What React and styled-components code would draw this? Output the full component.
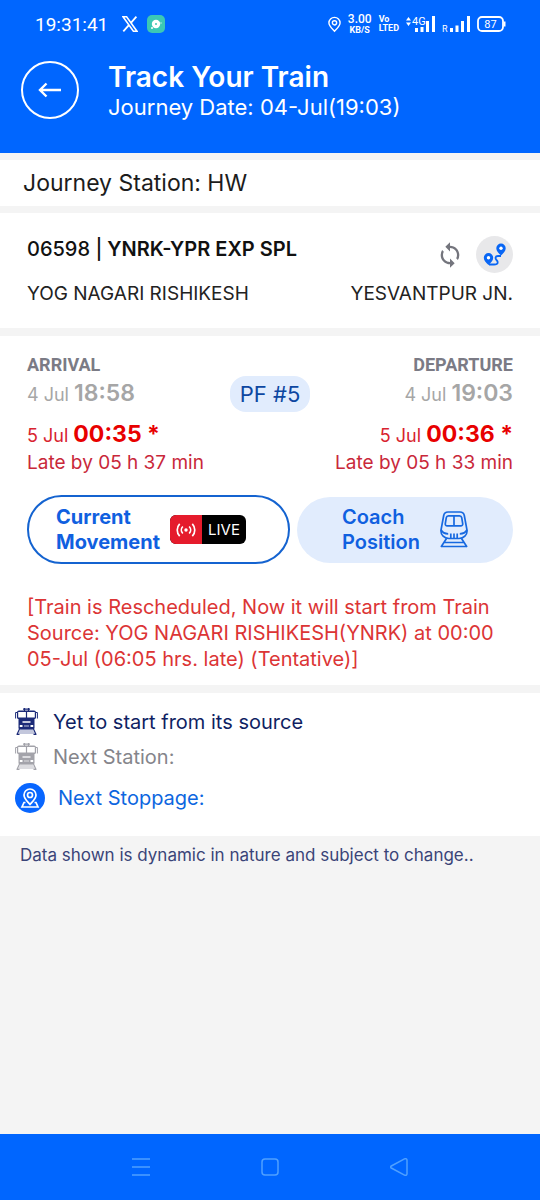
import React from 'react';
import styled, { createGlobalStyle } from 'styled-components';
import { MdLoop } from 'react-icons/md';

const GlobalStyle = createGlobalStyle`
  * {
    box-sizing: border-box;
  }

  body {
    margin: 0;
    background-color: #f4f4f4;
    font-family: Inter, 'Liberation Sans', sans-serif;
  }

  h1, h2, h3, p {
    margin: 0;
    font-weight: 400;
  }

  button {
    padding: 0;
    border: none;
    background: none;
    font-family: inherit;
    cursor: pointer;
  }

  svg {
    display: block;
    flex-shrink: 0;
  }
`;

const StatusBar = () => (
  <StatusDiv>
    <Clock>19:31:41</Clock>
    <svg width="16" height="16" viewBox="0 0 16 16" fill="none" stroke="#fff">
      <path d="M1 .8h3.6L15 15.2h-3.6z" strokeWidth="1.6" />
      <path d="M14.4.6 8.9 6.9M6.9 9.1 1.3 15.4" strokeWidth="1.8" />
    </svg>
    <AppBadge>
      <svg width="18" height="18" viewBox="0 0 18 18">
        <circle cx="9" cy="9" r="4.2" fill="#fff" />
        <circle cx="9" cy="9" r="1" fill="#3cc8b4" />
        <circle cx="5" cy="13" r="1" fill="#fff" />
        <circle cx="14" cy="8" r=".8" fill="#b8efe5" />
      </svg>
    </AppBadge>
    <StatusRight>
      <svg width="13" height="17" viewBox="0 0 14 17" fill="none" stroke="#fff" strokeWidth="1.5">
        <path d="M7 15.8C4 12.6 1 9.8 1 6.8a6 6 0 0 1 12 0c0 3-3 5.8-6 9z" />
        <circle cx="7" cy="6.7" r="2.3" />
      </svg>
      <Stacked>
        <SpeedValue>3.00</SpeedValue>
        <SpeedUnit>KB/S</SpeedUnit>
      </Stacked>
      <Stacked>
        <VoLte>Vo</VoLte>
        <VoLte>LTED</VoLte>
      </Stacked>
      <svg width="29" height="18" viewBox="0 0 29 18" fill="#fff">
        <path d="M0 5.5 2.5 2 5 5.5zM0 7.500 2.500 11 5 7.500z" />
        <text x="6" y="10" fontSize="11" fontFamily="Roboto, sans-serif">4G</text>
        <path d="M9 13h3v4H9zM14.5 12h3v5h-3zM20 6h3v11h-3zM26 1h3v16h-3z" />
      </svg>
      <svg width="28" height="18" viewBox="0 0 28 18" fill="#fff">
        <text x="0" y="17" fontSize="9" fontFamily="Roboto, sans-serif">R</text>
        <path d="M8 13h3v4H8zM13.5 10.5h3V17h-3zM19 6h3v11h-3zM25 1h3v16h-3z" />
      </svg>
      <svg width="29" height="16" viewBox="0 0 29 16">
        <rect x="1" y="1" width="25" height="14" rx="4" fill="none" stroke="#fff" strokeWidth="1.8" />
        <path d="M27.5 5.5v5" stroke="#fff" strokeWidth="2" />
        <text x="13.5" y="12" fontSize="11" textAnchor="middle" fill="#fff" fontFamily="Roboto, sans-serif">
          87
        </text>
      </svg>
    </StatusRight>
  </StatusDiv>
);

const TrainFront = ({ color, shade }) => (
  <svg width="23" height="27" viewBox="0 0 23 27">
    <path d="M9.5 0v3M13.5 0v3M8 1.2h7" stroke={color} strokeWidth="1.2" />
    <path d="M5.500 21h12l2.500 5H3z" fill={shade} />
    <path d="M4.500 21 2 26.500M18.500 21l2.500 5.500M1.500 26.300h3M18.500 26.300h3" stroke={color} strokeWidth="1.2" />
    <path d="M4 2.500h15c1.200 0 2 .8 2 2v5c0 .8-.7 1.500-1.500 1.500v9c0 .8-.7 1.500-1.500 1.500H5c-.8 0-1.500-.7-1.500-1.500v-9C2.700 11 2 10.300 2 9.500v-5c0-1.200.8-2 2-2z" fill={color} />
    <path d="M3.200 4h7.700v5.500H3.200zM12.100 4h7.700v5.500h-7.700z" fill="#fff" />
    <path d="M7.500 13h8v2h-8z" fill={shade} />
    <path d="M4.800 17h2.700v2H4.800zM15.500 17h2.700v2h-2.700z" fill="#fff" />
    <path d="M9 17.500h5v1H9z" fill={shade} />
    <path d="M2 4.500H.6v6M21 4.500h1.400v6" fill="none" stroke={color} strokeWidth="1" />
  </svg>
);

const CoachIcon = () => (
  <svg width="28" height="37" viewBox="0 0 28 37" fill="none" stroke="#1769e0" strokeWidth="1.7">
    <path d="M8 1h12c2.500 0 3.800 1.300 4.300 3.500L27 19c.5 5-3.500 8.500-8 8.500H9C4.500 27.500.5 24 1 19L3.700 4.500C4.200 2.300 5.500 1 8 1z" />
    <path d="M8.500 4.800h11c1.300 0 2 .6 2.200 1.800l1 6c.2 1.400-.5 2.200-2 2.200H7.300c-1.500 0-2.200-.8-2-2.200l1-6c.2-1.200.9-1.800 2.200-1.800zM14 5v9.500" />
    <path d="M1.200 19c1.500 3 3.800 3.800 7 3.800M26.800 19c-1.500 3-3.800 3.800-7 3.800M10.800 22.500V27M14 22.500V27M17.200 22.500V27" />
    <path d="M6.500 27.500 1 36M21.500 27.500 27 36M4 31.500h20M1 35.500h26" />
  </svg>
);

const TimeBlock = ({ label, scheduledDay, scheduled, actualDay, actual, late, alignRight }) => (
  <TimeDiv $right={alignRight}>
    <TimeLabel>{label}</TimeLabel>
    <Scheduled>
      {scheduledDay} <b>{scheduled}</b>
    </Scheduled>
    <Actual>
      {actualDay} <b>{actual} *</b>
    </Actual>
    <Late>{late}</Late>
  </TimeDiv>
);

const App = () => {
  return (
    <Page>
      <GlobalStyle />
      <Header>
        <StatusBar />
        <TitleRow>
          <BackButton aria-label="Back">
            <svg width="24" height="18" viewBox="0 0 24 18" fill="none" stroke="#fff" strokeWidth="2.4">
              <path d="M23 9H2M8.500 2.500 2 9l6.500 6.500" />
            </svg>
          </BackButton>
          <div>
            <Title>Track Your Train</Title>
            <SubTitle>Journey Date: 04-Jul(19:03)</SubTitle>
          </div>
        </TitleRow>
      </Header>

      <Main>
        <StationBar>Journey Station: HW</StationBar>

        <TrainCard>
          <SpreadRow>
            <TrainName>
              <span>06598 |</span> YNRK-YPR EXP SPL
            </TrainName>
            <Actions>
              <IconButton aria-label="Refresh">
                <MdLoop size={28} color="#74757d" />
              </IconButton>
              <IconButton aria-label="Route" $filled>
                <svg width="24" height="23" viewBox="0 0 24 23">
                  <path d="M6 21.500h5c5 0 4-3 2.500-4.500s-1.500-4 1.500-4h3" fill="none" stroke="#0866f5" strokeWidth="1.8" />
                  <path
                    d="M5.500 22C3 19.500.8 17.500.8 14.800a4.700 4.700 0 0 1 9.400 0c0 2.700-2.200 4.700-4.700 7.200zM18 12.500c-2.500-2.500-4.700-4.500-4.700-7.200a4.700 4.700 0 0 1 9.400 0c0 2.700-2.200 4.700-4.700 7.200z"
                    fill="#0866f5"
                  />
                  <circle cx="5.5" cy="14.7" r="1.7" fill="#fff" />
                  <circle cx="18" cy="5.2" r="1.7" fill="#fff" />
                </svg>
              </IconButton>
            </Actions>
          </SpreadRow>
          <SpreadRow>
            <Place>YOG NAGARI RISHIKESH</Place>
            <Place>YESVANTPUR JN.</Place>
          </SpreadRow>
        </TrainCard>

        <TimesCard>
          <TimesRow>
            <TimeBlock
              label="ARRIVAL"
              scheduledDay="4 Jul"
              scheduled="18:58"
              actualDay="5 Jul"
              actual="00:35"
              late="Late by 05 h 37 min"
            />
            <Platform>PF #5</Platform>
            <TimeBlock
              label="DEPARTURE"
              scheduledDay="4 Jul"
              scheduled="19:03"
              actualDay="5 Jul"
              actual="00:36"
              late="Late by 05 h 33 min"
              alignRight
            />
          </TimesRow>

          <ButtonRow>
            <MovementButton>
              <span>
                Current
                <br />
                Movement
              </span>
              <LiveBadge>
                <LiveSignal>
                  <svg width="20" height="16" viewBox="0 0 20 16" fill="none" stroke="#fff" strokeWidth="1.7">
                    <circle cx="10" cy="8" r="1.7" fill="#fff" stroke="none" />
                    <path d="M6.800 4.500a5 5 0 0 0 0 7M13.200 4.500a5 5 0 0 1 0 7M3.700 1.800a9 9 0 0 0 0 12.400M16.300 1.800a9 9 0 0 1 0 12.400" />
                  </svg>
                </LiveSignal>
                <LiveText>LIVE</LiveText>
              </LiveBadge>
            </MovementButton>
            <CoachButton>
              <span>
                Coach
                <br />
                Position
              </span>
              <CoachIcon />
            </CoachButton>
          </ButtonRow>

          <Notice>
            [Train is Rescheduled, Now it will start from Train
            <br />
            Source: YOG NAGARI RISHIKESH(YNRK) at 00:00
            <br />
            05-Jul (06:05 hrs. late) (Tentative)]
          </Notice>
        </TimesCard>

        <StatusCard>
          <StatusRow $color="#101f63">
            <TrainFront color="#1b2a78" shade="#c3c7dc" />
            Yet to start from its source
          </StatusRow>
          <StatusRow $color="#85858b">
            <TrainFront color="#a3a3aa" shade="#dcdce0" />
            Next Station:
          </StatusRow>
          <StatusRow $color="#0d66e0" $tall>
            <svg width="30" height="30" viewBox="0 0 30 30" fill="none" stroke="#fff" strokeWidth="1.7">
              <circle cx="15" cy="15" r="15" fill="#0866ff" stroke="none" />
              <path d="M15 21.500c-3-3.500-6-6-6-9.500a6 6 0 0 1 12 0c0 3.500-3 6-6 9.500z" />
              <circle cx="15" cy="12" r="2.5" />
              <path d="M10.500 19.500H9L7 24h16l-2-4.500h-1.500" />
            </svg>
            Next Stoppage:
          </StatusRow>
        </StatusCard>

        <Disclaimer>Data shown is dynamic in nature and subject to change..</Disclaimer>
      </Main>

      <NavBar>
        <NavButton aria-label="Recent apps">
          <svg width="18" height="18" viewBox="0 0 18 18">
            <path d="M0 1h18M0 9h18M0 17h18" />
          </svg>
        </NavButton>
        <NavButton aria-label="Home">
          <svg width="18" height="18" viewBox="0 0 18 18">
            <rect x="1" y="1" width="16" height="16" rx="3" />
          </svg>
        </NavButton>
        <NavButton aria-label="Back to previous screen">
          <svg width="18" height="18" viewBox="0 0 18 18">
            <path d="M1.300 8 14.500.9C16 .3 17 1 17 2.200v13.600c0 1.200-1 1.900-2.500 1.300L1.300 10c-.8-.5-.8-1.500 0-2z" />
          </svg>
        </NavButton>
      </NavBar>
    </Page>
  );
};

const Page = styled.div`
  min-height: 100vh;
  display: flex;
  flex-direction: column;
`;

const Header = styled.header`
  padding-bottom: 34px;
  background-color: #0066ff;
  color: #fff;
`;

const StatusDiv = styled.div`
  height: 48px;
  padding: 0 34px 0 35px;
  display: flex;
  align-items: center;
`;

const Clock = styled.span`
  width: 87px;
  font-family: Roboto, sans-serif;
  font-size: 19px;
`;

const AppBadge = styled.span`
  margin-left: 9px;
  border-radius: 5px;
  background-color: #3cc8b4;
`;

const StatusRight = styled.div`
  margin-left: auto;
  display: flex;
  align-items: center;
  gap: 7px;
`;

const Stacked = styled.div`
  display: flex;
  flex-direction: column;
  align-items: center;
  font-family: Roboto, sans-serif;
`;

const SpeedValue = styled.span`
  font-size: 12px;
  line-height: 13px;
  font-weight: 500;
`;

const SpeedUnit = styled.span`
  font-size: 9px;
  line-height: 9px;
  font-weight: 700;
`;

const VoLte = styled.span`
  align-self: flex-start;
  font-size: 9px;
  line-height: 9px;
  font-weight: 700;
`;

const TitleRow = styled.div`
  padding: 13px 21px 0;
  display: flex;
  gap: 29px;
  height: 71px;
`;

const BackButton = styled.button`
  width: 58px;
  height: 58px;
  display: flex;
  align-items: center;
  justify-content: center;
  && {
    border: 2px solid #fff;
  }
  border-radius: 50%;
`;

const Title = styled.h1`
  && {
    font-weight: 600;
  }
  font-size: 28px;
  line-height: 32px;
`;

const SubTitle = styled.p`
  font-size: 22px;
  line-height: 28px;
`;

const Main = styled.main`
  flex: 1;
`;

const StationBar = styled.section`
  margin-top: 7px;
  padding: 0 23px;
  background-color: #fff;
  color: #1c1c1c;
  font-size: 23px;
  line-height: 46px;
`;

const TrainCard = styled.section`
  margin-top: 7px;
  padding: 23px 27px 21px;
  display: flex;
  flex-direction: column;
  gap: 8px;
  background-color: #fff;
`;

const SpreadRow = styled.div`
  display: flex;
  justify-content: space-between;
`;

const TrainName = styled.h2`
  && {
    font-weight: 600;
  }
  color: #111;
  font-size: 20px;
  line-height: 26px;

  span {
    font-weight: 500;
  }
`;

const Actions = styled.div`
  display: flex;
  gap: 8px;
`;

const IconButton = styled.button`
  && {
    background-color: ${(props) => (props.$filled ? '#e8e8ea' : 'transparent')};
  }
  width: 37px;
  height: 37px;
  display: flex;
  align-items: center;
  justify-content: center;
  border-radius: 50%;
`;

const Place = styled.span`
  color: #222;
  font-size: 19px;
  line-height: 26px;
`;

const TimesCard = styled.section`
  margin-top: 8px;
  padding: 16px 27px 13px;
  background-color: #fff;
`;

const TimesRow = styled.div`
  display: grid;
  grid-template-columns: 1fr auto 1fr;
  align-items: start;
`;

const TimeDiv = styled.div`
  text-align: ${(props) => (props.$right ? 'right' : 'left')};
  white-space: nowrap;
`;

const TimeLabel = styled.h3`
  && {
    font-weight: 700;
  }
  color: #7b7b85;
  font-family: Roboto, sans-serif;
  font-size: 18px;
  line-height: 26px;
`;

const Scheduled = styled.p`
  color: #a6a6a6;
  font-size: 18px;
  line-height: 34px;

  b {
    font-size: 23px;
    font-weight: 600;
    line-height: 1;
  }
`;

const Actual = styled.p`
  margin-top: 8px;
  color: #d8232f;
  font-size: 18px;
  line-height: 32px;

  b {
    color: #e80000;
    font-size: 23px;
    font-weight: 700;
    line-height: 1;
  }
`;

const Late = styled.p`
  color: #c9283a;
  font-size: 19px;
  line-height: 22px;
`;

const Platform = styled.span`
  margin-top: 24px;
  padding: 0 10px;
  border-radius: 16px;
  background-color: #e1ecfd;
  color: #0d47a1;
  font-size: 22px;
  line-height: 36px;
`;

const ButtonRow = styled.div`
  margin-top: 21px;
  display: grid;
  grid-template-columns: 263fr 216fr;
  align-items: center;
  gap: 7px;
`;

const PillButton = styled.button`
  display: flex;
  align-items: center;
  border-radius: 35px;
  color: #1060e0;
  font-size: 20px;
  line-height: 25px;
  text-align: left;
`;

const MovementButton = styled(PillButton)`
  && {
    border: 2px solid #1463d0;
    padding: 0 27px;
  }
  height: 69px;
  gap: 10px;
  font-weight: 700;
`;

const CoachButton = styled(PillButton)`
  && {
    background-color: #e1ecfd;
    padding: 0 45px;
  }
  height: 66px;
  justify-content: space-between;
  font-weight: 600;
`;

const LiveBadge = styled.span`
  height: 29px;
  display: flex;
  border-radius: 6px;
  overflow: hidden;
  background-color: #000;
`;

const LiveSignal = styled.span`
  width: 32px;
  display: flex;
  align-items: center;
  justify-content: center;
  background-color: #e51b2c;
`;

const LiveText = styled.span`
  width: 44px;
  color: #fff;
  font-size: 15px;
  font-weight: 400;
  line-height: 29px;
  text-align: center;
`;

const Notice = styled.p`
  margin-top: 30px;
  color: #dc3535;
  font-size: 20px;
  line-height: 26px;
`;

const StatusCard = styled.section`
  margin-top: 8px;
  padding: 11px 15px 14px;
  background-color: #fff;
`;

const StatusRow = styled.div`
  height: ${(props) => (props.$tall ? '48px' : '35px')};
  display: flex;
  align-items: center;
  gap: ${(props) => (props.$tall ? '13px' : '15px')};
  color: ${(props) => props.$color};
  font-size: 20px;
`;

const Disclaimer = styled.p`
  padding: 7px 20px;
  color: #3a4478;
  font-size: 17px;
  line-height: 24px;
`;

const NavBar = styled.nav`
  height: 66px;
  padding: 0 77px;
  display: flex;
  background-color: #0066ff;
`;

const NavButton = styled.button`
  flex: 1;
  display: flex;
  align-items: center;
  justify-content: center;

  svg {
    fill: none;
    stroke: #4fa0ff;
    stroke-width: 1.5;
  }
`;

export default App;
